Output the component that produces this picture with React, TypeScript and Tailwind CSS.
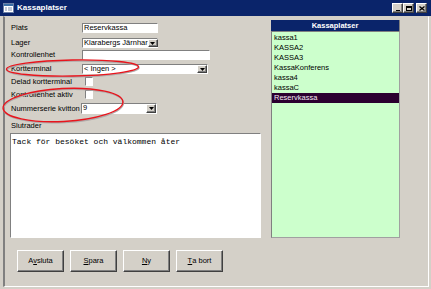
import React from "react";

const raised =
  "bg-[#d4d0c8] border border-t-white border-l-white border-r-[#404040] border-b-[#404040] shadow-[inset_-1px_-1px_#808080]";
const sunken =
  "bg-white border border-t-[#808080] border-l-[#808080] border-r-white border-b-white";

function Arrow() {
  return (
    <div className={`${raised} w-[10px] h-full flex items-center justify-center shrink-0`}>
      <svg width="5" height="3" viewBox="0 0 5 3">
        <path d="M0 0h5L2.5 3z" fill="#000" />
      </svg>
    </div>
  );
}

function Combo({ text, width, h = 10 }: { text: string; width: number; h?: number }) {
  return (
    <div className={`${sunken} flex items-stretch`} style={{ width, height: h }}>
      <div className="flex-1 whitespace-nowrap pl-[1px] leading-[8px]">{text}</div>
      <Arrow />
    </div>
  );
}

function Row({ label, children, mt }: { label: string; children: React.ReactNode; mt: string }) {
  return (
    <div className={`flex items-center ${mt}`}>
      <div className="w-[72px] pl-[1px] whitespace-nowrap leading-[8px]">{label}</div>
      {children}
    </div>
  );
}

const items = ["kassa1", "KASSA2", "KASSA3", "KassaKonferens", "kassa4", "kassaC", "Reservkassa"];

function Btn({ children }: { children: React.ReactNode }) {
  return (
    <button className={`${raised} w-[47px] h-[22px] flex items-center justify-center text-[7.5px] text-black`}>
      {children}
    </button>
  );
}

export default function App() {
  return (
    <div className="relative w-[431px] h-[289px] bg-[#d4d0c8] flex flex-col overflow-hidden font-['Liberation_Sans',sans-serif] text-[7.5px] text-black">
      {/* title bar */}
      <div className="h-[16px] bg-[#0a246a] flex items-center pl-[3px] pr-[4px] shrink-0">
        <svg width="11" height="10" viewBox="0 0 11 10">
          <rect x="0.5" y="0.5" width="10" height="9" fill="#fff" stroke="#6a7fa8" />
          <rect x="1" y="1" width="9" height="2" fill="#3a6ea5" />
          <path d="M2 5h2M5 5h4M2 7h2M5 7h4" stroke="#8090b0" />
        </svg>
        <span className="ml-[3px] text-white font-bold text-[8px] leading-none">Kassaplatser</span>
        <div className="ml-auto flex items-center">
          <div className={`${raised} w-[11px] h-[10px] flex items-end justify-center pb-[1px]`}>
            <div className="w-[4px] h-[1.5px] bg-black" />
          </div>
          <div className={`${raised} w-[11px] h-[10px] flex items-center justify-center`}>
            <div className="w-[6px] h-[5px] border border-black border-t-2" />
          </div>
          <div className={`${raised} ml-[2px] w-[11px] h-[10px] flex items-center justify-center`}>
            <svg width="6" height="5" viewBox="0 0 6 5">
              <path d="M0.5 0.5l5 4M5.5 0.5l-5 4" stroke="#000" strokeWidth="1.3" />
            </svg>
          </div>
        </div>
      </div>

      {/* client area */}
      <div className="flex-1 ml-[3px] mr-[2px] mb-[2px] border-l-2 border-l-[#808080] border-t border-t-[#d4d0c8] border-r border-r-white border-b border-b-white flex flex-col">
        <div className="flex pl-[5px] pt-[3px]">
          {/* left */}
          <div className="w-[251px] flex flex-col">
            <Row label="Plats" mt="mt-[3px]">
              <div className={`${sunken} w-[76px] h-[10px] pl-[1px] leading-[8px]`}>Reservkassa</div>
            </Row>
            <Row label="Lager" mt="mt-[5px]">
              <Combo text="Klarabergs Järnhar" width={76} />
            </Row>
            <Row label="Kontrollenhet" mt="mt-[2px]">
              <div className={`${sunken} w-[128px] h-[10px]`} />
            </Row>
            <Row label="Kortterminal" mt="mt-[4px]">
              <Combo text="< Ingen >" width={126} />
            </Row>
            <Row label="Delad kortterminal" mt="mt-[3px]">
              <div className={`${sunken} ml-[3px] w-[8px] h-[9px]`} />
            </Row>
            <Row label="Kontrollenhet aktiv" mt="mt-[4px]">
              <div className={`${sunken} ml-[3px] w-[8px] h-[9px]`} />
            </Row>
            <div className="flex items-center mt-[4px]">
              <div className="w-[71px] pl-[1px] whitespace-nowrap leading-[8px]">Nummerserie kvitton</div>
              <Combo text="9" width={76} h={11} />
            </div>
            <div className="mt-[7px] h-[10px] pl-[1px] leading-[10px]">Slutrader</div>
            <div className={`${sunken} mt-[2px] h-[105px] pl-[1px] pt-[3px] font-['Liberation_Mono',monospace] text-[8px] leading-[9px]`}>
              Tack för besöket och välkommen åter
            </div>
          </div>

          {/* right */}
          <div className="ml-[10px] w-[129px] flex flex-col">
            <div className="h-[11px] bg-[#0a246a] text-white font-bold text-center leading-[11px] border-r border-r-[#808080]">
              Kassaplatser
            </div>
            <div className="h-[207px] bg-[#ccffcc] border border-t-[#808080] border-l-[#808080] border-r-[#a0a0a0] border-b-[#a0a0a0] pt-[1px]">
              {items.map((it, i) => (
                <div
                  key={it}
                  className={`h-[10px] leading-[10px] pl-[2px] ${i === 6 ? "bg-[#2b0030] text-[#f4e8f4]" : ""}`}
                >
                  {it}
                </div>
              ))}
            </div>
          </div>
        </div>

        <div className="flex gap-[6px] ml-[12px] mt-[12px]">
          <Btn>
            A<span className="underline">v</span>sluta
          </Btn>
          <Btn>
            <span className="underline">S</span>para
          </Btn>
          <Btn>
            <span className="underline">N</span>y
          </Btn>
          <Btn>
            <span className="underline">T</span>a bort
          </Btn>
        </div>
      </div>

      {/* red annotation ellipses */}
      <svg className="absolute left-0 top-0 pointer-events-none" width="431" height="289" viewBox="0 0 431 289">
        <ellipse cx="73" cy="69" rx="66" ry="8" fill="none" stroke="#b0a8a8" strokeWidth="1.5" transform="rotate(-1 73 69)" />
        <ellipse cx="72.5" cy="68" rx="66" ry="8" fill="none" stroke="#e8141c" strokeWidth="1.4" transform="rotate(-1 72.5 68)" />
        <ellipse cx="63.5" cy="106" rx="60" ry="16.5" fill="none" stroke="#b0a8a8" strokeWidth="1.5" transform="rotate(-3 63.5 106)" />
        <ellipse cx="63" cy="105" rx="60" ry="16.5" fill="none" stroke="#e8141c" strokeWidth="1.4" transform="rotate(-3 63 105)" />
      </svg>
    </div>
  );
}
